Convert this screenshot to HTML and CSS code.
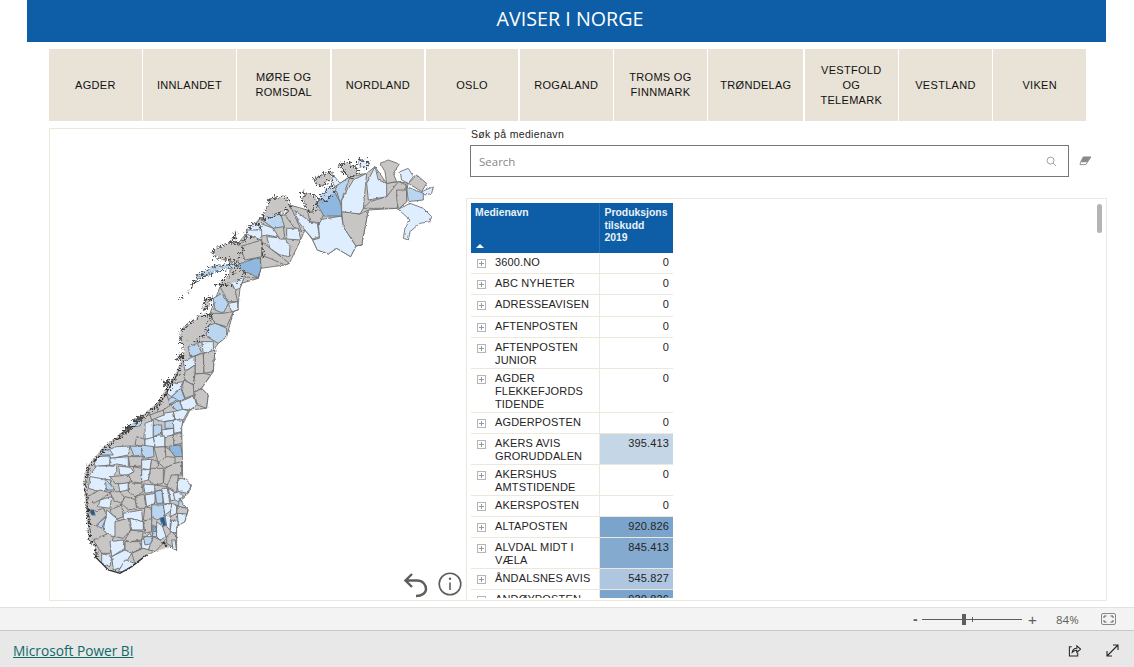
FILE: index.html
```html
<!DOCTYPE html>
<html lang="no">
<head>
    <meta charset="UTF-8">
    <meta name="viewport" content="width=device-width, initial-scale=1.0">
    <title>Aviser i Norge</title>
    <link rel="stylesheet" href="styles.css">
</head>
<body>
    <div class="report">
        <h1 class="title">AVISER I NORGE</h1>

        <div class="regions">
            <div class="region">AGDER</div>
            <div class="region">INNLANDET</div>
            <div class="region">MØRE OG ROMSDAL</div>
            <div class="region">NORDLAND</div>
            <div class="region">OSLO</div>
            <div class="region">ROGALAND</div>
            <div class="region">TROMS OG FINNMARK</div>
            <div class="region">TRØNDELAG</div>
            <div class="region">VESTFOLD OG TELEMARK</div>
            <div class="region">VESTLAND</div>
            <div class="region">VIKEN</div>
        </div>

        <div class="content">
            <div class="map-panel">
                <svg class="map" viewBox="49 128 417 473">
                    <defs>
                        <clipPath id="south-clip">
                            <polygon points="380,0 465,30 460,95 425,145 445,165 440,205 390,210 365,260 367,340 368,410 395,435 385,460 360,480 385,510 375,545 350,560 350,632 330,620 285,635 260,645 215,680 180,700 145,690 105,650 100,610 85,600 75,470 70,420 80,380 130,320 200,265 290,190 330,130 365,60"/>
                        </clipPath>
                        <!-- ujevne grenser og litt uskarpt, som i kartbildet -->
                        <filter id="rough" x="0" y="0" width="100%" height="100%" filterUnits="objectBoundingBox">
                            <feTurbulence type="fractalNoise" baseFrequency="0.28" numOctaves="2" seed="4" result="noise"/>
                            <feDisplacementMap in="SourceGraphic" in2="noise" scale="2.4" xChannelSelector="R" yChannelSelector="G"/>
                            <feGaussianBlur stdDeviation="0.35"/>
                        </filter>
                        <filter id="jag" x="-20%" y="-20%" width="140%" height="140%">
                            <feTurbulence type="turbulence" baseFrequency="0.13" numOctaves="3" seed="9" result="noise"/>
                            <feDisplacementMap in="SourceGraphic" in2="noise" scale="22" xChannelSelector="R" yChannelSelector="G"/>
                        </filter>
                    </defs>

                    <g filter="url(#rough)">
                        <rect x="49" y="128" width="417" height="473" fill="none"/>

                        <!-- Finnmark og Troms -->
                        <g class="cells" transform="translate(230 140) scale(.3333)">
                            <polygon class="c0" points="0,490 0,340 45,285 90,235 165,225 180,195 232,210 258,190 315,140 360,110 410,100 435,80 470,130 505,125 535,130 530,150 530,185 505,208 500,205 415,210 395,315 378,318 362,350 320,325 295,342 262,330 248,300 225,270 212,300 178,370 165,375 92,385 85,415 35,430 22,460 18,490"/>
                            <polygon class="c1" points="265,240 335,228 340,260 378,318 362,350 320,325 295,342 262,330 248,300 268,295"/>
                            <polygon class="c0" points="335,215 390,222 415,210 395,315 378,318 340,260"/>
                            <polygon class="c3" points="258,190 310,150 333,190 335,228 280,228 265,205"/>
                            <polygon class="c1" points="335,180 370,120 410,100 400,205 390,222 335,215"/>
                            <polygon class="c0" points="400,205 420,185 470,170 505,125 530,135 500,205"/>
                            <polygon class="c1" points="415,180 410,130 435,80 445,120 470,130 470,170"/>
                            <polygon class="c1" points="505,208 540,190 580,205 605,230 600,245 570,250 540,275 535,300 520,295 525,265 540,240"/>
                            <polygon class="c0" points="500,150 530,150 530,185 505,208 500,175"/>
                            <polygon class="c2" points="530,140 580,160 580,180 535,185"/>
                            <polygon class="c1" points="575,155 610,140 605,160 585,165"/>
                            <polygon class="c0" points="535,130 560,105 590,130 575,155"/>
                            <polygon class="c1" points="510,95 535,85 550,110 535,130 515,120"/>
                            <polygon class="c0" points="450,70 475,60 508,72 490,100 500,125 470,130 465,95"/>
                            <polygon class="c2" points="315,140 360,110 335,180 330,185"/>
                            <polygon class="c1" points="310,105 330,130 315,140 305,125"/>
                            <polygon class="c1" points="195,212 240,245 262,250 268,290 248,297 225,270 205,245"/>
                            <polygon class="c0" points="232,210 260,190 280,225 270,248 240,245"/>
                            <polygon class="c0" points="165,225 180,195 215,275 190,260"/>
                            <polygon class="c1" points="110,290 165,295 180,320 178,350 150,345 120,325"/>
                            <polygon class="c0" points="95,305 120,325 178,370 165,375 120,355 90,345"/>
                            <polygon class="c1" points="170,265 205,265 212,300 170,297"/>
                            <polygon class="c3" points="20,375 92,350 92,385 85,415 60,400 40,395"/>
                            <polygon class="c2" points="90,235 150,215 165,265 130,265"/>
                            <polygon class="c1" points="45,285 90,250 130,265 160,295 110,285 85,290"/>
                            <polygon class="c0" points="130,265 160,260 165,297 150,298"/>
                            <polygon class="c1" points="0,430 25,415 35,430 22,460 5,445"/>
                            <polygon class="c0" points="0,450 18,465 18,490 0,490"/>
                            <polygon class="c1" points="0,490 22,490 25,510 0,515"/>
                        </g>
                        <g class="isles" transform="translate(230 140) scale(.3333)" filter="url(#jag)">
                            <polygon class="c0" points="245,115 270,100 305,90 300,115 265,135"/>
                            <polygon class="c0" points="320,70 355,60 385,95 350,110 335,85"/>
                            <polygon class="c1" points="380,55 415,60 405,80 385,75"/>
                            <polygon class="c0" points="115,170 165,165 180,200 150,215 90,235 105,200"/>
                            <polygon class="c0" points="215,150 260,170 250,210 232,210 215,180"/>
                            <polygon class="c2" points="265,165 300,130 310,150 280,180"/>
                            <polygon class="c1" points="40,285 65,245 90,250 60,290"/>
                            <polygon class="c0" points="0,340 45,285 85,290 95,345 20,375"/>
                        </g>

                        <!-- Nordland -->
                        <g class="cells" transform="translate(165 230) scale(.3333)">
                            <polygon class="c0" points="75,350 135,250 165,170 215,120 288,115 278,145 238,140 225,175 218,240 205,245 185,320 160,340 145,360 150,390 110,390"/>
                            <polygon class="c3" points="215,105 285,80 288,115 278,145 255,130 235,125"/>
                            <polygon class="c1" points="195,150 215,120 238,140 225,175 210,180"/>
                            <polygon class="c0" points="165,170 195,150 210,180 218,215 190,215"/>
                            <polygon class="c1" points="190,220 218,215 218,240 200,245"/>
                            <polygon class="c2" points="145,205 170,190 190,220 175,250 150,240"/>
                            <polygon class="c0" points="135,250 175,250 205,245 185,290 150,280"/>
                            <polygon class="c2" points="120,290 150,280 185,295 185,320 160,340 125,320"/>
                            <polygon class="c1" points="110,335 145,335 145,360 115,370"/>
                            <polygon class="c2" points="75,350 110,335 115,370 90,375"/>
                            <polygon class="c0" points="110,370 145,360 150,390 110,390"/>
                            <polygon class="c1" points="245,0 290,0 290,30 250,15"/>
                            <polygon class="c0" points="225,50 290,30 290,80 240,90"/>
                        </g>
                        <g class="isles" transform="translate(165 230) scale(.3333)" filter="url(#jag)">
                            <polygon class="c0" points="135,60 170,40 205,30 230,50 210,90 150,80"/>
                            <polygon class="c1" points="190,30 210,0 205,30"/>
                            <polygon class="c2" points="75,160 100,125 140,105 205,95 210,105 150,120 100,140"/>
                            <polygon class="c0" points="150,160 200,125 215,105 235,125 215,150 195,160"/>
                            <polygon class="c0" points="40,300 100,250 135,250 120,300 70,350 45,350"/>
                            <polygon class="c0" points="30,385 75,350 90,375 65,390"/>
                            <polygon class="c0" points="115,205 135,200 130,225 110,235"/>
                            <polygon class="c0" points="40,198 50,192 46,202"/>
                            <polygon class="c0" points="68,178 74,174 72,182"/>
                        </g>

                        <!-- Sør-Norge -->
                        <g transform="translate(60 340) scale(.3333)">
                            <g class="cells" clip-path="url(#south-clip)">
                                <rect class="c0" x="60" y="0" width="400" height="710"/>
                                <polygon class="c1" points="425,5 462,0 465,30 430,40"/>
                                <polygon class="c2" points="385,20 412,10 425,38 405,48 390,50"/>
                                <polygon class="c0" points="405,48 430,40 432,100 405,102"/>
                                <polygon class="c0" points="430,40 465,30 460,95 432,100"/>
                                <polygon class="c1" points="370,65 405,48 405,75 375,95"/>
                                <polygon class="c0" points="375,95 405,75 405,102 400,135 372,120"/>
                                <polygon class="c0" points="405,102 432,100 452,105 425,145 402,158 400,135"/>
                                <polygon class="c0" points="365,145 372,120 400,135 402,165 375,175"/>
                                <polygon class="c1" points="335,130 370,125 362,145 335,170 320,160"/>
                                <polygon class="c2" points="310,190 345,165 350,180 325,195"/>
                                <polygon class="c2" points="335,170 362,145 375,175 360,185 345,175"/>
                                <polygon class="c0" points="402,158 425,145 445,165 440,205 412,195"/>
                                <polygon class="c1" points="360,185 402,168 410,195 390,210 368,208"/>
                                <polygon class="c2" points="332,195 358,182 368,208 355,215"/>
                                <polygon class="c1" points="340,215 368,208 385,212 370,240 345,240"/>
                                <polygon class="c0" points="290,195 320,165 332,195 310,210 295,225"/>
                                <polygon class="c1" points="275,235 310,220 340,215 345,240 310,245"/>
                                <polygon class="c0" points="270,225 310,210 312,225 275,240"/>
                                <polygon class="c2" points="205,245 245,240 240,258 210,262"/>
                                <polygon class="c1" points="255,250 280,240 280,295 255,298"/>
                                <polygon class="c2" points="280,255 305,255 305,280 280,290"/>
                                <polygon class="c1" points="305,270 340,265 342,285 310,295"/>
                                <polygon class="c2" points="315,245 345,240 342,265 315,265"/>
                                <polygon class="c1" points="340,240 368,240 365,275 342,280"/>
                                <polygon class="c0" points="335,285 365,278 368,310 340,315"/>
                                <polygon class="c0" points="230,290 255,298 255,320 225,315"/>
                                <polygon class="c1" points="280,290 315,288 315,320 285,322"/>
                                <polygon class="c0" points="315,290 340,285 342,322 315,320"/>
                                <polygon class="c1" points="255,298 280,292 285,320 255,325"/>
                                <polygon class="c2" points="210,318 245,320 248,345 222,348"/>
                                <polygon class="c2" points="245,315 280,320 282,350 255,355 245,340"/>
                                <polygon class="c0" points="282,322 315,320 320,350 295,370"/>
                                <polygon class="c3" points="328,318 362,315 368,350 345,350 330,335"/>
                                <polygon class="c0" points="315,320 330,330 345,350 332,370 318,350"/>
                                <polygon class="c1" points="130,335 170,320 210,318 205,345 155,355"/>
                                <polygon class="c2" points="120,330 150,330 160,345 125,345"/>
                                <polygon class="c0" points="205,350 250,350 245,378 210,380"/>
                                <polygon class="c1" points="245,360 275,358 270,390 245,385"/>
                                <polygon class="c0" points="275,358 295,365 290,385 270,390"/>
                                <polygon class="c0" points="295,368 320,350 345,352 345,370 315,385"/>
                                <polygon class="c1" points="100,350 150,348 150,375 105,380"/>
                                <polygon class="c1" points="150,355 205,350 205,378 170,372 150,378"/>
                                <polygon class="c1" points="175,378 210,382 222,395 205,405 180,405"/>
                                <polygon class="c1" points="110,378 150,378 170,380 170,395 150,420 105,435 85,410"/>
                                <polygon class="c0" points="220,380 245,385 245,430 215,425 205,405 222,395"/>
                                <polygon class="c1" points="245,390 272,388 265,420 245,425"/>
                                <polygon class="c0" points="272,385 310,385 310,430 285,435 265,420"/>
                                <polygon class="c0" points="315,385 345,370 365,365 365,405 345,405 335,440 310,430"/>
                                <polygon class="c0" points="150,410 205,405 215,425 190,432 165,430"/>
                                <polygon class="c1" points="355,415 385,418 392,440 382,460 355,455 350,430"/>
                                <polygon class="c0" points="335,405 355,405 350,455 320,440"/>
                                <polygon class="c1" points="90,410 150,420 155,445 120,455 85,445"/>
                                <polygon class="c2" points="135,415 165,450 140,450"/>
                                <polygon class="c1" points="175,432 205,428 205,450 180,455"/>
                                <polygon class="c0" points="205,430 245,430 250,455 225,470 205,455"/>
                                <polygon class="c1" points="250,432 285,435 285,455 255,460"/>
                                <polygon class="c0" points="285,435 320,440 325,465 300,450 285,455"/>
                                <polygon class="c1" points="325,445 345,458 348,480 332,482"/>
                                <polygon class="c1" points="340,460 358,455 370,468 355,485 345,480"/>
                                <polygon class="c0" points="150,455 180,455 195,475 185,490 160,480"/>
                                <polygon class="c2" points="285,455 305,450 310,490 290,490"/>
                                <polygon class="c1" points="305,445 322,445 330,490 312,492"/>
                                <polygon class="c1" points="255,465 285,460 285,490 260,500"/>
                                <polygon class="c0" points="225,470 252,462 258,505 235,505"/>
                                <polygon class="c0" points="185,490 195,470 225,478 230,505 205,510"/>
                                <polygon class="c2" points="358,478 380,470 385,505 355,500"/>
                                <polygon class="c1" points="120,480 155,470 150,505 115,500"/>
                                <polygon class="c0" points="80,470 120,450 150,458 120,480 100,490"/>
                                <polygon class="c0" points="150,510 185,495 190,530 165,540"/>
                                <polygon class="c1" points="190,520 245,510 248,545 210,535 190,540"/>
                                <polygon class="c0" points="255,500 275,505 275,545 250,540"/>
                                <polygon class="c2" points="275,495 310,495 315,530 290,540 275,530"/>
                                <polygon class="c1" points="310,495 335,490 335,510 315,525"/>
                                <polygon class="c1" points="335,490 350,495 350,520 330,530"/>
                                <polygon class="c0" points="352,500 385,505 380,525 350,520"/>
                                <polygon class="c1" points="352,520 380,522 375,545 355,560"/>
                                <polygon class="c1" points="315,525 332,530 330,570 320,560"/>
                                <polygon class="c1" points="335,540 355,545 350,580 330,575"/>
                                <polygon class="c1" points="140,510 175,540 165,590 150,590 130,570"/>
                                <polygon class="c2" points="108,555 140,530 125,565"/>
                                <polygon class="c0" points="85,520 130,505 140,525 105,560 90,550"/>
                                <polygon class="c0" points="165,545 205,535 212,570 190,595 165,590"/>
                                <polygon class="c1" points="210,535 250,545 250,570 215,570"/>
                                <polygon class="c0" points="250,545 275,535 275,575 255,580"/>
                                <polygon class="c2" points="275,555 290,560 290,590 278,590"/>
                                <polygon class="c1" points="290,545 308,560 318,590 300,600 290,590"/>
                                <polygon class="c0" points="320,590 335,575 350,590 345,625 320,610"/>
                                <polygon class="c1" points="335,600 345,600 350,630 340,632"/>
                                <polygon class="c0" points="212,570 250,575 245,600 210,605 195,600"/>
                                <polygon class="c1" points="245,600 270,580 280,600 265,630 245,625"/>
                                <polygon class="c2" points="250,590 278,590 280,610 255,615"/>
                                <polygon class="c0" points="280,590 300,600 310,610 285,635 265,630"/>
                                <polygon class="c0" points="100,600 145,580 160,590 150,640 125,640"/>
                                <polygon class="c1" points="150,605 190,600 195,625 155,650"/>
                                <polygon class="c0" points="195,605 240,605 245,625 215,640 195,630"/>
                                <polygon class="c1" points="125,640 155,650 150,680 125,670"/>
                                <polygon class="c1" points="155,650 195,630 215,640 190,680 160,690"/>
                                <polygon class="c0" points="215,640 250,625 285,635 260,645 225,670"/>
                                <polygon class="c1" points="195,660 225,670 200,695 175,695"/>
                                <polygon class="c4" points="300,535 312,532 318,555 308,560"/>
                                <polygon class="c4" points="90,510 102,510 105,525 95,525"/>
                                <polygon class="c3" points="278,560 288,562 288,575 280,575"/>
                            </g>
                            <polyline class="outline" points="465,30 460,95 425,145 445,165 440,205 390,210 365,260 367,340 368,410 395,435 385,460 360,480 385,510 375,545 350,560 350,632 330,620"/>
                            <g filter="url(#jag)">
                                <polyline class="coast" points="365,60 330,130 290,190 200,265 130,320 80,380 70,420 75,470 85,600 100,610 105,650"/>
                                <polygon class="speck" points="305,125 322,112 328,125 312,135"/>
                                <polygon class="speck" points="215,235 235,222 245,232 222,248"/>
                                <polygon class="speck" points="192,258 212,252 208,268 195,270"/>
                                <polygon class="speck" points="350,45 362,35 366,50"/>
                            </g>
                            <polyline class="coast-thin" points="105,650 145,690 180,700 215,680 260,645"/>
                            <polyline class="coast" points="310,605 320,620"/>
                        </g>
                    </g>
                </svg>

                <svg class="undo" viewBox="0 0 24 26">
                    <path d="M8 2 L1.5 8.5 L8 15 M1.5 8.5 H13 C19 8.5 22 13 22 17 C22 21 18 24 12 24"/>
                </svg>
                <svg class="info" viewBox="0 0 24 24">
                    <circle cx="12" cy="12" r="10.8"/>
                    <path d="M12 10.5 V18"/>
                    <circle class="dot" cx="12" cy="6.8" r="1.2"/>
                </svg>
            </div>

            <div class="data-col">
                <div class="search-label">Søk på medienavn</div>
                <div class="search-row">
                    <div class="search-box">
                        <span class="placeholder">Search</span>
                        <svg class="search-icon" viewBox="0 0 12 12">
                            <circle cx="5" cy="5" r="3.8"/>
                            <path d="M7.8 7.8 L11 11"/>
                        </svg>
                    </div>
                    <svg class="eraser" viewBox="0 0 14 11">
                        <path class="eraser-top" d="M4.5 1 H13 L9 7 H1.5 Z"/>
                        <path d="M1.5 7 L1 9.5 H7.5 L9 7"/>
                    </svg>
                </div>

                <div class="table-panel">
                    <div class="table-clip">
                        <table class="media-table">
                            <thead>
                                <tr>
                                    <th class="head-name">Medienavn<span class="sort-arrow"></span></th>
                                    <th class="head-value">Produksjons<br>tilskudd<br>2019</th>
                                </tr>
                            </thead>
                            <tbody>
                                <tr><td class="name"><div class="name-row"><span class="exp"></span><span>3600.NO</span></div></td><td class="val">0</td></tr>
                                <tr><td class="name"><div class="name-row"><span class="exp"></span><span>ABC NYHETER</span></div></td><td class="val">0</td></tr>
                                <tr class="row-tall"><td class="name"><div class="name-row"><span class="exp"></span><span>ADRESSEAVISEN</span></div></td><td class="val">0</td></tr>
                                <tr><td class="name"><div class="name-row"><span class="exp"></span><span>AFTENPOSTEN</span></div></td><td class="val">0</td></tr>
                                <tr><td class="name"><div class="name-row"><span class="exp"></span><span>AFTENPOSTEN JUNIOR</span></div></td><td class="val">0</td></tr>
                                <tr><td class="name"><div class="name-row"><span class="exp"></span><span>AGDER FLEKKEFJORDS TIDENDE</span></div></td><td class="val">0</td></tr>
                                <tr><td class="name"><div class="name-row"><span class="exp"></span><span>AGDERPOSTEN</span></div></td><td class="val">0</td></tr>
                                <tr><td class="name"><div class="name-row"><span class="exp"></span><span>AKERS AVIS GRORUDDALEN</span></div></td><td class="val heat-1">395.413</td></tr>
                                <tr><td class="name"><div class="name-row"><span class="exp"></span><span>AKERSHUS AMTSTIDENDE</span></div></td><td class="val">0</td></tr>
                                <tr><td class="name"><div class="name-row"><span class="exp"></span><span>AKERSPOSTEN</span></div></td><td class="val">0</td></tr>
                                <tr><td class="name"><div class="name-row"><span class="exp"></span><span>ALTAPOSTEN</span></div></td><td class="val heat-4">920.826</td></tr>
                                <tr><td class="name"><div class="name-row"><span class="exp"></span><span>ALVDAL MIDT I VÆLA</span></div></td><td class="val heat-3">845.413</td></tr>
                                <tr><td class="name"><div class="name-row"><span class="exp"></span><span>ÅNDALSNES AVIS</span></div></td><td class="val heat-2">545.827</td></tr>
                                <tr><td class="name"><div class="name-row"><span class="exp"></span><span>ANDØYPOSTEN</span></div></td><td class="val heat-4">920.826</td></tr>
                            </tbody>
                        </table>
                    </div>
                    <div class="scroll-thumb"></div>
                </div>
            </div>
        </div>
    </div>

    <div class="zoom-bar">
        <span class="zoom-minus">-</span>
        <div class="zoom-track">
            <span class="zoom-tick"></span>
            <span class="zoom-thumb"></span>
        </div>
        <span class="zoom-plus">+</span>
        <span class="zoom-value">84%</span>
        <svg class="fit-icon" viewBox="0 0 15 12">
            <rect class="fit-frame" x="0.5" y="0.5" width="14" height="11" rx="1.5"/>
            <path d="M3 5 V3 H5.5 M9.5 3 H12 V5 M12 7 V9 H9.5 M5.5 9 H3 V7"/>
        </svg>
    </div>

    <div class="footer">
        <a class="pbi-link" href="#">Microsoft Power BI</a>
        <div class="footer-icons">
            <svg class="share-icon" viewBox="0 0 14 14">
                <path d="M4 3 H1.5 V13 H10.5 V9.5"/>
                <path d="M4.5 9 C5 6 7 4.5 9.5 4.5 V2 L13.5 5.5 L9.5 9 V6.8 C7.5 6.8 6 7.5 4.5 9 Z"/>
            </svg>
            <svg class="expand-icon" viewBox="0 0 13 13">
                <path d="M1 12 L12 1 M7 1 H12 V6 M1 7 V12 H6"/>
            </svg>
        </div>
    </div>
</body>
</html>
```

FILE: styles.css
```css
* {
    box-sizing: border-box;
}

html, body {
    height: 100%;
}

body {
    margin: 0;
    display: flex;
    flex-direction: column;
    overflow: hidden;
    background-color: #fff;
    font-family: "Liberation Sans", Arial, sans-serif;
    color: #252423;
}

.report {
    height: 607px;
    flex: none;
}

.title {
    height: 42px;
    margin: 0 28px 0 27px;
    padding-left: 7px;
    background-color: #0d5ea6;
    color: #fff;
    font-family: "Open Sans", sans-serif;
    font-size: 19.7px;
    font-weight: 400;
    line-height: 38px;
    text-align: center;
}

.regions {
    display: grid;
    grid-template-columns: repeat(11, 1fr);
    gap: 1.5px;
    height: 72px;
    margin: 7px 48px 0 49px;
}

.region {
    display: flex;
    align-items: center;
    justify-content: center;
    padding: 0 12px;
    background-color: #e8e2d7;
    color: #111;
    font-size: 11px;
    letter-spacing: 0.3px;
    line-height: 15px;
    text-align: center;
}

.content {
    display: grid;
    grid-template-columns: 417px 641px;
    height: 473px;
    margin: 7px 0 0 49px;
}

/* kart */
.map-panel {
    position: relative;
    border: 1px solid #ece9dc;
    border-right: none;
}

.map {
    display: block;
    width: 417px;
    height: 473px;
    margin: -1px;
}

.cells polygon, .cells rect {
    stroke: #6b6b6b;
    stroke-width: 2.6;
    stroke-linejoin: round;
}

.isles polygon {
    stroke: #444;
    stroke-width: 3.5;
    stroke-linejoin: round;
}

.c0 { fill: #c8c6c4; }
.c1 { fill: #deeeff; }
.c2 { fill: #b9d5ef; }
.c3 { fill: #8fb8e0; }
.c4 { fill: #0d5ea6; }

.outline {
    fill: none;
    stroke: #6b6b6b;
    stroke-width: 2.6;
}

.coast {
    fill: none;
    stroke: #333;
    stroke-width: 6;
    stroke-dasharray: 9 2;
}

.coast-thin {
    fill: none;
    stroke: #2f2f2f;
    stroke-width: 4;
}

.speck {
    fill: #555;
    stroke: #333;
    stroke-width: 3;
}

.undo {
    position: absolute;
    left: 354px;
    top: 443px;
    width: 24px;
    height: 26px;
    fill: none;
    stroke: #605e5c;
    stroke-width: 2.4;
}

.info {
    position: absolute;
    left: 388px;
    top: 443px;
    width: 24px;
    height: 24px;
    fill: none;
    stroke: #605e5c;
    stroke-width: 1.6;
}

.info .dot {
    fill: #605e5c;
    stroke: none;
}

/* høyre kolonne */
.data-col {
    display: flex;
    flex-direction: column;
}

.search-label {
    height: 17px;
    padding-left: 5px;
    font-size: 10.5px;
    letter-spacing: 0.35px;
    line-height: 13px;
}

.search-row {
    display: flex;
    align-items: center;
    height: 32px;
    padding-left: 4px;
}

.search-box {
    display: flex;
    align-items: center;
    justify-content: space-between;
    width: 599px;
    height: 32px;
    padding: 0 11px 0 8px;
    border: 1px solid #777;
}

.placeholder {
    color: #8a8886;
    font-family: "Open Sans", sans-serif;
    font-size: 11.5px;
}

.search-icon {
    width: 11px;
    height: 11px;
    fill: none;
    stroke: #9a9a9a;
}

.eraser {
    width: 13px;
    height: 10px;
    margin: -1px 0 0 10px;
    fill: #fff;
    stroke: #8a8a8a;
}

.eraser .eraser-top {
    fill: #8a8a8a;
}

.table-panel {
    position: relative;
    height: 403px;
    margin-top: 21px;
    padding: 4px 0 2px 4px;
    border: 1px solid #ece9dc;
}

.table-clip {
    height: 100%;
    overflow: hidden;
}

.media-table {
    width: 202px;
    border-collapse: collapse;
    table-layout: fixed;
    font-size: 11px;
    letter-spacing: 0.15px;
}

.media-table th {
    height: 50px;
    padding: 4px 4px 0;
    background-color: #0d5ea6;
    color: #e9f1f8;
    font-size: 10.4px;
    font-weight: 700;
    letter-spacing: 0;
    line-height: 12.5px;
    text-align: left;
    vertical-align: top;
}

.media-table .head-name {
    position: relative;
    width: 128px;
    border-right: 1px solid #2a70ae;
}

.media-table .head-value {
    padding-left: 5px;
}

.sort-arrow {
    position: absolute;
    left: 5px;
    bottom: 5px;
    width: 0;
    height: 0;
    border-left: 4px solid transparent;
    border-right: 4px solid transparent;
    border-bottom: 4px solid #fff;
}

.media-table td {
    height: 21px;
    padding: 3px 4px 1px;
    border-bottom: 1px solid #ece9dc;
    line-height: 13px;
    vertical-align: top;
}

.media-table tbody tr:first-child td {
    height: 20px;
}

.media-table .row-tall td {
    height: 22px;
}

.media-table .name {
    padding-left: 6px;
    border-right: 1px solid #ece9dc;
}

.name-row {
    display: flex;
    gap: 9px;
}

.exp {
    flex: none;
    width: 9px;
    height: 9px;
    margin-top: 3px;
    border: 1px solid #b5b5b5;
    background:
        linear-gradient(#9a9a9a, #9a9a9a) center / 5px 1px no-repeat,
        linear-gradient(#9a9a9a, #9a9a9a) center / 1px 5px no-repeat;
}

.media-table .val {
    text-align: right;
}

.heat-1 { background-color: #c5d7e6; }
.heat-2 { background-color: #aec6e0; }
.heat-3 { background-color: #85aad0; }
.heat-4 { background-color: #7ba4cc; }

.scroll-thumb {
    position: absolute;
    top: 5px;
    right: 4px;
    width: 5px;
    height: 29px;
    border-radius: 3px;
    background-color: #b4b4b4;
}

/* statuslinje */
.zoom-bar {
    display: flex;
    align-items: center;
    flex: none;
    height: 24px;
    padding-left: 913px;
    border-top: 1px solid #e1e1e1;
    border-bottom: 1px solid #c8c8c8;
    background-color: #f3f3f3;
    color: #605e5c;
}

.zoom-minus {
    width: 9px;
    font-size: 14px;
    font-weight: 700;
}

.zoom-track {
    position: relative;
    width: 100px;
    height: 1px;
    background-color: #605e5c;
}

.zoom-tick {
    position: absolute;
    left: 50px;
    top: -2px;
    width: 1px;
    height: 5px;
    background-color: #605e5c;
}

.zoom-thumb {
    position: absolute;
    left: 40px;
    top: -5px;
    width: 4px;
    height: 11px;
    background-color: #605e5c;
}

.zoom-plus {
    width: 34px;
    padding-left: 6px;
    font-size: 15px;
}

.zoom-value {
    width: 45px;
    font-family: "Open Sans", sans-serif;
    font-size: 11.5px;
}

.fit-icon {
    width: 15px;
    height: 12px;
    fill: none;
    stroke: #605e5c;
}

.fit-frame {
    stroke: #8a8886;
}

.footer {
    display: flex;
    align-items: center;
    justify-content: space-between;
    flex: 1;
    padding: 2px 15px 0 13px;
    background-color: #e8e8e8;
}

.pbi-link {
    color: #0e6a6a;
    font-family: "Open Sans", sans-serif;
    font-size: 13.7px;
}

.footer-icons {
    display: flex;
    align-items: center;
    gap: 25px;
}

.share-icon, .expand-icon {
    width: 13px;
    height: 13px;
    fill: none;
    stroke: #252423;
    stroke-width: 1.1;
}
```
